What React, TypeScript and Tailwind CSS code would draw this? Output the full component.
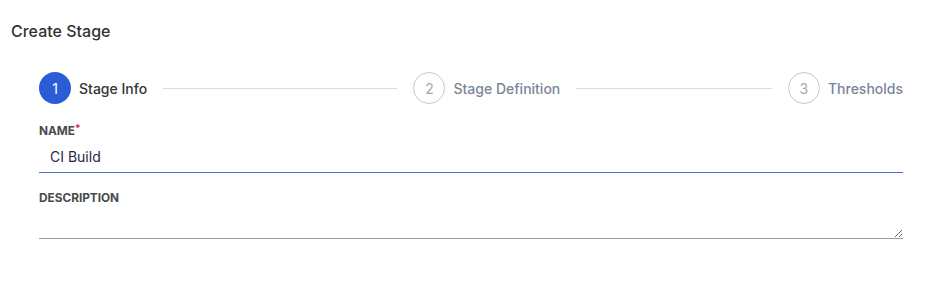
import type { ReactNode } from 'react';

const steps = [
  { n: 1, label: 'Stage Info', active: true },
  { n: 2, label: 'Stage Definition', active: false },
  { n: 3, label: 'Thresholds', active: false },
];

const Step = ({ n, label, active, last }: { n: number; label: string; active: boolean; last: boolean }) => (
  <div className={`flex items-center ${last ? 'shrink-0' : 'flex-1'}`}>
    <div
      className={`w-8 h-8 shrink-0 rounded-full flex items-center justify-center text-[14px] ${
        active ? 'bg-[#2b5cd6] text-white' : 'border border-[#c9c9c9] text-[#a8a8a8] bg-white'
      }`}>
      {n}
    </div>
    <span className={`ml-2 text-[14px] font-medium whitespace-nowrap ${active ? 'text-[#333]' : 'text-[#7b8597]'}`}>
      {label}
    </span>
    {!last && <div className="flex-1 h-px bg-[#dcdcdc] mx-4" />}
  </div>
);

const Label = ({ children, required }: { children: ReactNode; required?: boolean }) => (
  <div className="text-[11.8px] font-bold text-[#4a4a4a] leading-4">
    {children}
    {required && <span className="text-[#e0262a] relative -top-[3px] text-[10px]">*</span>}
  </div>
);

export default function App() {
  return (
    <div className="w-[937px] h-[304px] bg-white font-['Inter',sans-serif]">
      <h1 className="pl-[11px] pt-[21px] text-[16px] leading-5 font-medium text-[#333]">Create Stage</h1>
      <div className="pl-[39px] pr-[34px]">
        <div className="flex items-center mt-[31px]">
          {steps.map((s, i) => (
            <Step key={s.n} {...s} last={i === steps.length - 1} />
          ))}
        </div>
        <div className="mt-[19px]">
          <Label required>NAME</Label>
          <input
            defaultValue="CI Build"
            className="block w-full h-[33px] px-[11px] text-[14px] text-[#1f2a44] border-b border-[#4a72c4] outline-none mt-[1px]"
          />
        </div>
        <div className="mt-[17px]">
          <Label>DESCRIPTION</Label>
          <textarea
            className="block w-full h-[33px] px-[11px] text-[14px] border-b border-[#9b9b9b] outline-none resize-y"
          />
        </div>
      </div>
    </div>
  );
}
